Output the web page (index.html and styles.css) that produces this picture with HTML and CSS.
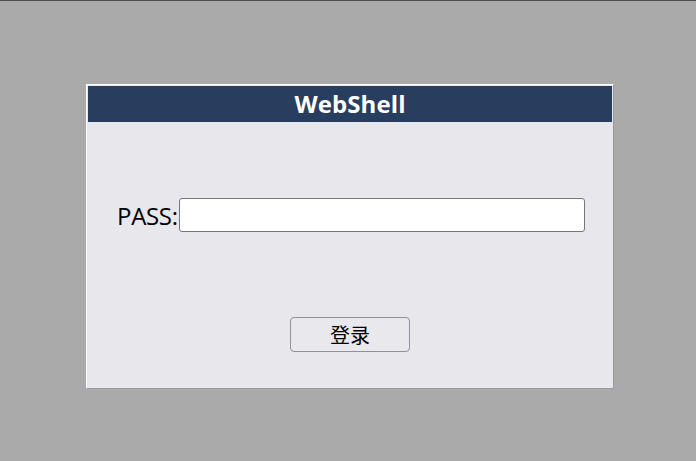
FILE: index.html
```html
<!DOCTYPE html>
<html lang="zh-CN">
<head>
  <meta charset="UTF-8">
  <title>WebShell</title>
  <link rel="stylesheet" href="styles.css">
</head>
<body>
  <div class="login-box">
    <h1 class="login-title">WebShell</h1>
    <form class="login-form">
      <div class="pass-row">
        <label for="pass">PASS:</label>
        <input type="password" id="pass" name="pass">
      </div>
      <div class="btn-row">
        <button type="submit">登录</button>
      </div>
    </form>
  </div>
</body>
</html>
```

FILE: styles.css
```css
* {
  margin: 0;
  padding: 0;
  box-sizing: border-box;
}

body {
  background-color: #aaaaaa;
  border-top: 1px solid #4e4e4e;
  height: 461px;
  overflow: hidden;
  font-family: "Open Sans", "Noto Sans", "Noto Sans CJK SC", sans-serif;
}

.login-box {
  width: 528px;
  height: 305px;
  margin: 83px 0 0 86px;
  padding: 1px;
  background-color: #e8e7ec;
  border-top: 1px solid #ffffff;
  border-left: 1px solid #ffffff;
  border-right: 1px solid #9a9a9a;
  border-bottom: 1px solid #9a9a9a;
}

.login-title {
  height: 36px;
  background-color: #283e5f;
  color: #ffffff;
  font-size: 24px;
  font-weight: bold;
  line-height: 36px;
  text-align: center;
  letter-spacing: 0.1px;
}

.login-form {
  display: flex;
  flex-direction: column;
}

.pass-row {
  display: flex;
  align-items: center;
  margin-top: 76px;
  padding-left: 29px;
}

.pass-row label {
  font-size: 24px;
  color: #000000;
  letter-spacing: -0.3px;
}

.pass-row input {
  width: 406px;
  height: 34px;
  margin-left: 1px;
  border: 1px solid #767676;
  border-radius: 3px;
  background-color: #ffffff;
}

.btn-row {
  display: flex;
  justify-content: center;
  margin-top: 85px;
}

.btn-row button {
  width: 120px;
  height: 35px;
  font-family: "Noto Sans CJK SC", sans-serif;
  font-size: 20px;
  color: #000000;
  background-color: #e9e9ed;
  border: 1px solid #8f8f9d;
  border-radius: 4px;
}
```
